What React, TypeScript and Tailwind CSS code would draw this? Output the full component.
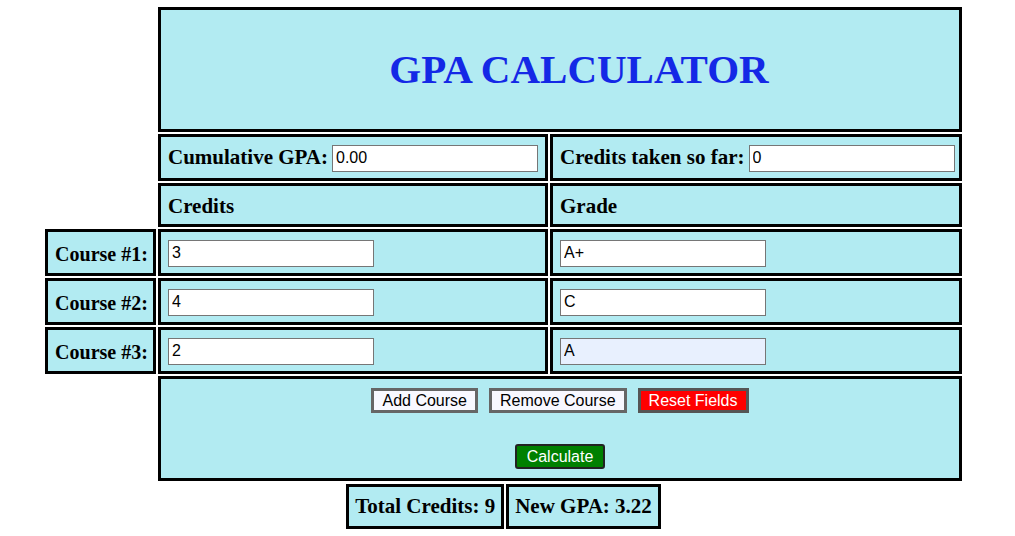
import React from "react";

const serif = "font-['Liberation_Serif',serif]";
const cell = "border-[3px] border-black bg-[#b2ebf2]";
const inputCls =
  "w-[206px] h-[27px] border border-[#767676] bg-white px-[3px] text-[16px] font-normal text-black font-['Liberation_Sans',Arial,sans-serif] outline-none";

function Input({ value, autofill }: { value: string; autofill?: boolean }) {
  return (
    <input
      readOnly
      value={value}
      className={inputCls + (autofill ? " !bg-[#e8f0fe]" : "")}
    />
  );
}

export default function App() {
  const courses = [
    { n: 1, c: "3", g: "A+" },
    { n: 2, c: "4", g: "C" },
    { n: 3, c: "2", g: "A", auto: true },
  ];
  return (
    <div className={`bg-white w-[1015px] h-[536px] pt-[7px] pl-[45px] ${serif} text-black`}>
      <div className="w-[917px]">
        <div className="grid grid-cols-[111px_390px_412px] gap-[2px]">
          <div className={`${cell} col-start-2 col-span-2 h-[125px] flex items-center justify-center pl-[38px]`}>
            <h1 className="text-[41px] font-bold text-[#1428e6] leading-none">GPA CALCULATOR</h1>
          </div>

          <div />
          <div className={`${cell} h-[47px] flex items-center gap-[4px] pl-[7px] pt-[1px] text-[21px] font-bold`}>
            <span>Cumulative GPA:</span>
            <Input value="0.00" />
          </div>
          <div className={`${cell} h-[47px] flex items-center gap-[4px] pl-[7px] pt-[1px] text-[21px] font-bold`}>
            <span>Credits taken so far:</span>
            <Input value="0" />
          </div>

          <div />
          <div className={`${cell} h-[44px] flex items-center pl-[7px] pt-[4px] text-[21px] font-bold`}>Credits</div>
          <div className={`${cell} h-[44px] flex items-center pl-[7px] pt-[4px] text-[21px] font-bold`}>Grade</div>

          {courses.map((r) => (
            <React.Fragment key={r.n}>
              <div className={`${cell} h-[47px] flex items-center justify-center pt-[2px] pl-[2px] text-[20px] font-bold`}>
                Course #{r.n}:
              </div>
              <div className={`${cell} h-[47px] flex items-center pl-[7px] pt-[1px]`}>
                <Input value={r.c} />
              </div>
              <div className={`${cell} h-[47px] flex items-center pl-[7px] pt-[1px]`}>
                <Input value={r.g} autofill={r.auto} />
              </div>
            </React.Fragment>
          ))}

          <div />
          <div className={`${cell} col-span-2 h-[105px] flex flex-col items-center pt-[9px] gap-[31px] font-['Liberation_Sans',Arial,sans-serif] text-[16px]`}>
            <div className="flex gap-[11px]">
              <button className="h-[25px] px-[8px] border-[3px] border-[#666] bg-[#f8f8ff] text-black leading-none">
                Add Course
              </button>
              <button className="h-[25px] px-[8px] border-[3px] border-[#666] bg-[#f8f8ff] text-black leading-none">
                Remove Course
              </button>
              <button className="h-[25px] px-[8px] border-[3px] border-[#555] bg-[#ff0000] text-white leading-none">
                Reset Fields
              </button>
            </div>
            <button className="h-[25px] px-[10px] border-[2px] border-[#222] rounded-[3px] bg-[#008000] text-white leading-none">
              Calculate
            </button>
          </div>
        </div>

        <div className="flex justify-center gap-[2px] mt-[3px]">
          <div className={`${cell} h-[45px] flex items-center px-[6px] pt-[1px] text-[21px] font-bold`}>Total Credits: 9</div>
          <div className={`${cell} h-[45px] flex items-center px-[6px] pt-[1px] text-[21px] font-bold`}>New GPA: 3.22</div>
        </div>
      </div>
    </div>
  );
}
